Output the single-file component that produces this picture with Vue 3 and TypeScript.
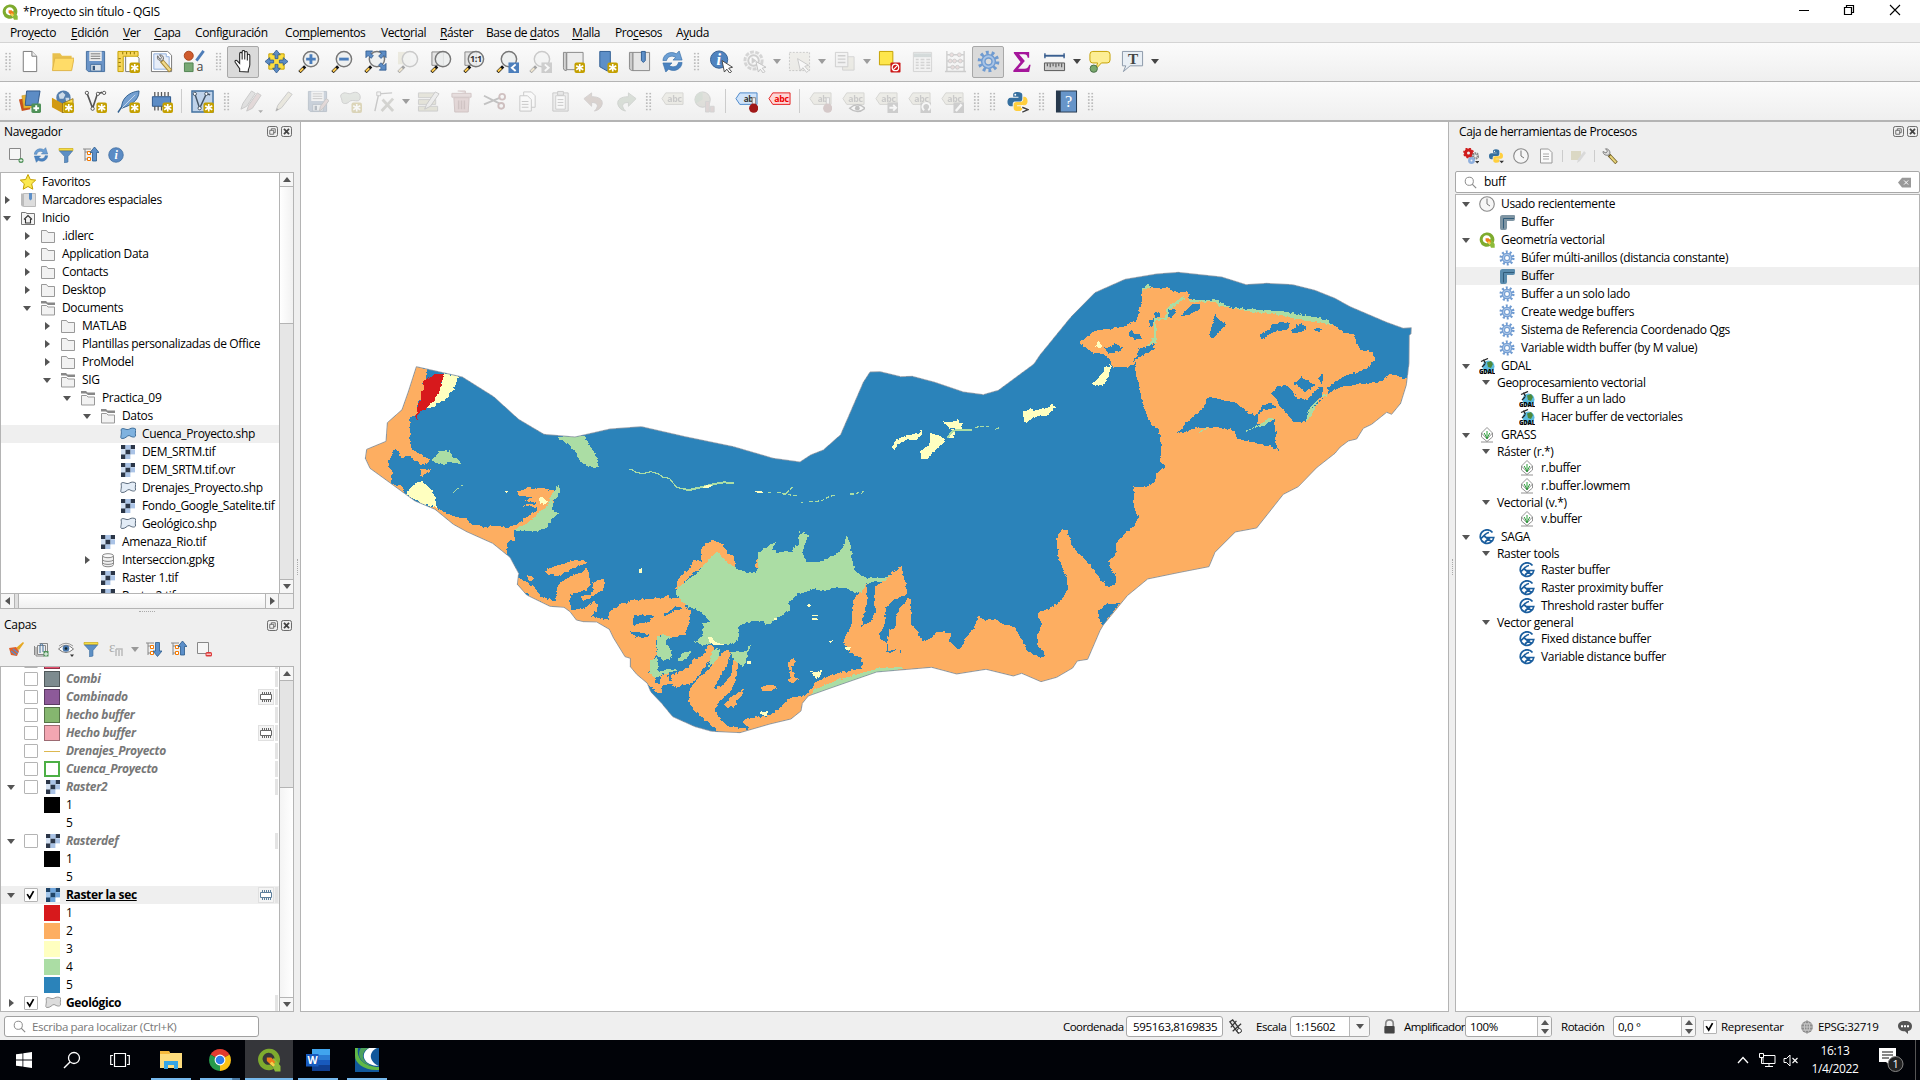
<script setup lang="ts">
interface Tool { k: 'i' | 'g' | 's' | 'a'; n?: string; on?: boolean; dim?: boolean; tight?: boolean }
interface Node { d: number; t: string; i: string; a?: 'o' | 'c'; sel?: boolean; group?: boolean }
interface Layer { t: string; i?: string; c?: string; b?: string; a?: 'o' | 'c'; chk?: boolean; top?: boolean; mem?: boolean; st?: string; sel?: boolean }

const star = '<rect x="13" y="13" width="11" height="11" rx="2" fill="#c4a000"/><path d="M18.5 14.5v8M14.8 16.4l7.4 4.2M14.8 20.6l7.4-4.2" stroke="#fff" stroke-width="1.7"/>'
const lens = '<path d="M1.5 23l6-6" stroke="#111" stroke-width="3.4"/><path d="M2 22.500l3.500-3.500" stroke="#fcc94f" stroke-width="2.200"/><circle cx="13.500" cy="9.500" r="8" fill="#eceeee" fill-opacity=".85" stroke="#777" stroke-width="1.500"/>'
const paper = '<path d="M5.500 1.500h9l5 5v16h-14z" fill="#fff" stroke="#777"/><path d="M14.500 1.500v5h5" fill="#eee" stroke="#777"/>'
const gear = '<circle cx="12" cy="12" r="9.300" fill="none" stroke="#6f9bd1" stroke-width="4" stroke-dasharray="2.900 2.943"/><circle cx="12" cy="12" r="5.400" fill="none" stroke="#6f9bd1" stroke-width="5"/><circle cx="12" cy="12" r="5.400" fill="none" stroke="#a9c4e6" stroke-width="2"/>'
const tag = (c: string, f: string, tx: string, t = 'abc') => `<path d="M1 9l4-6h18v12H5z" fill="${f}" stroke="${c}"/><text x="14" y="12.500" text-anchor="middle" font-size="10" font-weight="700" font-family="Open Sans,sans-serif" fill="${tx}" textLength="${t.length * 5}" lengthAdjust="spacingAndGlyphs">${t}</text>`
const raster = (a: string, b: string, c: string) => `<path fill="${c}" d="M1 1h14v14H1z"/><path fill="${a}" d="M1 1h4.500v4H1zM10.500 1H15v4h-4.500zM5.500 5.500h5v5h-5zM1 10.500h4.500V15H1z"/><path fill="${b}" d="M5.500 1h5v4.500h-5zM10.500 5.500H15v5h-4.500zM5.500 10.500h5V15h-5z"/><path d="M10.500 10.500H15V15h-4.500z" fill="#fff"/>`
const blob = (f: string, s: string) => `<path d="M1 3.500C3.500.8 6 5 9.500 3c2-1.300 4.500-1 5.900-.2.800 2.200-.7 4 .2 7.200-1.500 2-4 .8-6.500-.5-2.200 0-3.500 3.500-7.500 3C-.5 11.500 2.300 8.500 1 3.500z" fill="${f}" stroke="${s}"/>`
const arrowsTree = (p: string) => `<path d="M2 2v12M2 5h4M2 12h4M0 2h8" stroke="#888" fill="none"/><path d="M4.500 4.500h3v3h-3zM4.500 10.500h3v3h-3z" fill="#fff" stroke="#f57900"/><path d="${p}" fill="#5c8fc9" stroke="#2a5a8c" stroke-width=".8"/>`
const python = '<path d="M12 2c-4 0-4.500 1.500-4.500 3v2H13v1H5c-2.500 0-3.500 2-3.500 4.500S3 17 5 17h2v-2.500C7 12.500 8.500 12 10 12h4c2 0 3-1 3-3V5c0-2-2-3-5-3z" fill="#356f9f"/><path d="M12.500 22c4 0 4.500-1.500 4.500-3v-2h-5.500v-1H19c2.500 0 3.500-2 3.500-4.500S21 7 19 7h-1v2.500C18 12 16.500 12.500 15 12.500h-4c-2 0-3 1-3 3V19c0 2 2 3 4.500 3z" fill="#ffcf3e"/><circle cx="9.700" cy="5" r="1" fill="#fff"/>'
const qgis = '<path fill-rule="evenodd" d="M11 .8A10.700 10.700 0 1 0 17 20.800l-3.500-4.300A6 6 0 1 1 17.300 12.500l4.400 4A10.700 10.700 0 0 0 11 .8z" fill="#7eab2e"/><path d="M13 13l4-3 6.500 8v5.500H18z" fill="#8dbb3a"/><path d="M9.800 9.500h4.500l4 4.500-3.500 3.500-5-4.500z" fill="#ef7b1a"/><path d="M15 13.500l3 3.500-2 1.700-3.300-3.200z" fill="#f6d14a"/>'
const refresh = '<path d="M2 11C2.500 4 10 .5 16 4l3-3 3 9.500h-9.500l2.800-2.800C11 5 6.500 7 5.800 11z" fill="#6c9fd4" stroke="#3a70a8" stroke-width=".7"/><path d="M22 13c-.5 7-8 10.500-14 7l-3 3-3-9.500h9.500l-2.800 2.800C13 19 17.500 17 18.200 13z" fill="#4a82c0" stroke="#3a70a8" stroke-width=".7"/>'
const pencil = '<path d="M3 22l2-6L16 2l4 2.500L9 18.500z" fill="#d8cf9c" stroke="#777"/><path d="M3 22l1-3 2 1z" fill="#222"/>'
const disk = '<path d="M2.500 1.500h19v21h-17l-2-2z" fill="#6a94c8" stroke="#46709f"/><path d="M5.500 1.500h13v10h-13z" fill="#eee"/><path d="M7 4h10M7 6.500h10M7 9h10" stroke="#777"/><path d="M7 15h11v7H7z" fill="#dce3ea" stroke="#46709f"/><path d="M9 16.500h2.500V21H9z" fill="#36587e"/>'
const filter = '<path d="M1 1.500h14v2H1z" fill="#f5de43" stroke="#c4a000" stroke-width=".6"/><path d="M1.500 4h13L10 9.500V15l-3.500 1V9.500z" fill="#5d8fc4" stroke="#42709f" stroke-width=".6"/>'
const saga = '<path d="M13.500 3.500A6.800 6.800 0 1 0 14.800 8.500H7M1.200 9.500C4 9.500 6 3.500 10 3.500M4.500 6.500l8.500 6.500M11 8.500L6 13" fill="none" stroke="#1b5e9e" stroke-width="1.700"/>'
const grass = '<path d="M8 .5l5.500 5.500L8 12 2.500 6z" fill="#fff" stroke="#888" stroke-width=".9"/><path d="M2.500 6v4L8 14.500l5.500-4.500V6" fill="none" stroke="#888" stroke-width=".9"/><path d="M8 12V4M8 11.500L5.200 6M8 11.500L10.800 6" stroke="#2f9e3c" stroke-width="1" fill="none"/><path d="M2 15h12" stroke="#777" stroke-width=".8"/>'
const gdal = '<circle cx="9.500" cy="8.500" r="6" fill="#5bbbe0"/><path d="M8 4.500l4-1.500 2 3-2 4-3-1z" fill="#4e8a3c"/><path d="M2 3.500L9 .5M4.500 1.500l2 4M6 6L3 9" stroke="#222" stroke-width="1.300"/><text x="8" y="15.700" text-anchor="middle" font-size="7.500" font-weight="800" font-family="Open Sans,sans-serif" textLength="16" lengthAdjust="spacingAndGlyphs" fill="#000">GDAL</text>'
const clock = '<circle cx="8" cy="8" r="7.300" fill="#f6f6f6" stroke="#888" stroke-width="1.100"/><path d="M8 2.500V8l3 2" fill="none" stroke="#777"/>'
const info = '<circle cx="8" cy="8" r="7.300" fill="#5b8bc4" stroke="#3a689c" stroke-width=".7"/><text x="8" y="12.200" text-anchor="middle" font-family="Liberation Serif,serif" font-style="italic" font-weight="700" font-size="12" fill="#fff">i</text>'
const elbow = (c: string) => `<path d="M1 3.500Q1 1 3.500 1H15q1 0 1 1v3q0 2-2 2H8v7q0 2-2 2H2.500Q1 16 1 14z" fill="${c}"/><path d="M4.500 14.500v-10H15" stroke="#315c7a" fill="none"/>`

const icons: Record<string, string> = {
  qgis,
  new: paper,
  open: '<path d="M1.500 3.500h8l2 2.500h10v15h-20z" fill="#e9c14e"/><path d="M4 8.500h20l-2.500 13H1.500z" fill="#ffdc68" stroke="#e0b548"/>',
  save: disk,
  layout: '<path d="M9 3.500h9l5 5v14H9z" fill="#fff" stroke="#777"/><path d="M1 1.500h21v5H6.500v16H1z" fill="#f7d65a" stroke="#c4a000"/><path d="M6 2v2.500M10 2v2.500M14 2v2.500M18 2v2.500M1.500 9H4M1.500 13H4M1.500 17H4" stroke="#8a7000"/>' + star,
  style: '<path d="M1.500 1.500h17l4 4v17h-21z" fill="#fff" stroke="#777"/><path d="M4 4h13v3h3v13H4z" fill="#e8eef8" stroke="#8fb0de"/><path d="M12 11l9.500 11" stroke="#a8893a" stroke-width="4.500"/><path d="M13 12l8 9.300" stroke="#f0d98a" stroke-width="2.500"/><path d="M8 6c-1 3 1 5.500 4 5.500l2-2C14.500 7 13 5 10 5l2 3-1.500 2z" fill="#ddd" stroke="#666"/>',
  props: '<circle cx="6" cy="6" r="4.700" fill="#cf5b2d" stroke="#a8441c"/><path d="M14 11l7.500-10" stroke="#4e7db8" stroke-width="3"/><path d="M1.500 13.500h9v9h-9z" fill="#78a874" stroke="#4f8350"/><text x="14" y="22" font-size="13" font-family="Open Sans,sans-serif" fill="#444">a</text>',
  hand: '<path d="M8 22.500v-3L3.500 13c-1.200-2 .8-3 2.200-1.500L8 14V4c0-2 2.600-2 2.600 0v6-8c0-2 2.700-2 2.700 0v8-7c0-2 2.700-2 2.700 0v8-5c0-2 2.600-2 2.600 0v9c0 3-1.600 4.500-1.600 6.500v1.500z" fill="#fff" stroke="#222" stroke-width="1.100"/>',
  pan: '<path d="M4 4h16v16H4z" fill="#fdde3e" stroke="#c4a000"/><path d="M12 0l4 5h-2.500v4h-3V5H8zM12 24l-4-5h2.500v-4h3v4H16zM0 12l5-4v2.500h4v3H5V16zM24 12l-5 4v-2.500h-4v-3h4V8z" fill="#5c8cc5" stroke="#2c568a" stroke-width=".8"/>',
  zin: lens + '<path d="M13.500 4.500v10M8.500 9.500h10" stroke="#4a7dbb" stroke-width="3"/>',
  zout: lens + '<path d="M8.500 9.500h10" stroke="#4a7dbb" stroke-width="3"/>',
  zfull: lens + '<path d="M2 1h7L6.800 3.200l3 3-2.500 2.500-3-3L2 8zM23 1v7l-2.200-2.200-3 3-2.500-2.500 3-3L16 1zM23 21h-7l2.200-2.200-3-3 2.500-2.500 3 3L23 14z" fill="#5c8cc5" stroke="#2c568a" stroke-width=".8"/>',
  zsel: '<path d="M1 2h13v13H1z" fill="#ddd49a"/>' + lens,
  zlay: '<path d="M2 2h12v14H2z" fill="#e4e4e4" stroke="#888"/>' + lens,
  z11: '<path d="M2 2h12v14H2z" fill="#e4e4e4" stroke="#888"/>' + lens + '<text x="13.500" y="13" text-anchor="middle" font-size="9.500" font-weight="700" font-family="Open Sans,sans-serif" fill="#333">1:1</text>',
  zlast: lens + '<path d="M13 13h11v11H13z" fill="#4d7fbc"/><path d="M20.500 15l-4 3.500 4 3.500" fill="none" stroke="#fff" stroke-width="2"/>',
  znext: lens + '<path d="M13 13h11v11H13z" fill="#888"/><path d="M16.500 15l4 3.500-4 3.500" fill="none" stroke="#fff" stroke-width="2"/>',
  map: '<path d="M5 2.500h17v18H5z" fill="#ececec" stroke="#888"/><path d="M1.500 2.500h3v19c-2 0-3-1-3-3z" fill="#d4d4d4" stroke="#888"/>' + star,
  bmnew: '<path d="M5 1.500h11V19l-3 3-8-4.500z" fill="#5d8fc8" stroke="#2f5d92"/>' + star,
  bm: '<path d="M5 2.500h17.500v19H5z" fill="#e6e6e6" stroke="#888"/><path d="M1.500 2.500H5v19c-2 0-3.500-1-3.500-3z" fill="#ccc" stroke="#888"/><path d="M14 1.500h4V11l-2 2-2-2z" fill="#5d8fc8" stroke="#2f5d92"/>',
  refresh,
  ident: '<circle cx="9.500" cy="10" r="9" fill="#4f83bf" stroke="#345f92"/><text x="9" y="15.500" text-anchor="middle" font-family="Liberation Serif,serif" font-style="italic" font-weight="700" font-size="17" fill="#fff">i</text><path d="M12.500 11l2.500 12 2.500-3 3 4 2-1.500-3-3.500 4-1z" fill="#fff" stroke="#444"/>',
  action: '<circle cx="11" cy="11" r="9" fill="#eee" stroke="#999" stroke-width="3" stroke-dasharray="4 1.500"/><circle cx="11" cy="11" r="5.500" fill="#fff" stroke="#888" stroke-width="2"/><path d="M9 7.500l5 3.500-5 3.500z" fill="#888"/><path d="M13.500 12l2.500 11 2-3 3 4 2-1.500-3-3.500 4-1z" fill="#fff" stroke="#666"/>',
  select: '<path d="M1.500 2.500h21v19h-21z" fill="#e2dfc8" stroke="#777" stroke-dasharray="2 1.500"/><path d="M10 9l3 13 2.500-3.500 4 5 2-2-4-4.500 4-1z" fill="#fff" stroke="#777"/>',
  form: '<path d="M10 7h12v14H10z" fill="#ddd9b8" stroke="#999"/><path d="M2.500 2.500h13v15h-13z" fill="#eee" stroke="#888"/><path d="M5 6h8M5 9.500h8M5 13h8" stroke="#888" stroke-width="1.500"/>',
  desel: '<path d="M1.500 1.500h14v14h-14z" fill="#fee64c" stroke="#c4a000"/><rect x="13" y="13" width="10.500" height="10.500" rx="1" fill="#cc1616"/><circle cx="18.200" cy="18.200" r="3.400" fill="none" stroke="#fff" stroke-width="1.300"/><path d="M16 20.500l4.500-4.500" stroke="#fff" stroke-width="1.300"/>',
  table: '<path d="M2.500 2.500h19v20h-19z" fill="#eee" stroke="#999"/><path d="M3 5.500h18" stroke="#8aa" stroke-width="4"/><path d="M5 10h3M10 10h4M16 10h4M5 13h3M10 13h4M16 13h4M5 16h3M10 16h4M16 16h4M5 19h3M10 19h4M16 19h4" stroke="#999" stroke-width="1.500"/>',
  abacus: '<path d="M3 1v21M21 1v21M3 5h18M3 11.500h18M3 18h18M1 22.500h22" stroke="#888" fill="none" stroke-width="1.500"/><g fill="#eaa" stroke="#888"><circle cx="8" cy="5" r="2"/><circle cx="16" cy="5" r="2"/><circle cx="6.500" cy="11.500" r="2"/><circle cx="11" cy="11.500" r="2"/><circle cx="17" cy="11.500" r="2"/><circle cx="9" cy="18" r="2"/><circle cx="14" cy="18" r="2"/></g>',
  gear,
  sigma: '<path d="M4 2h16v6h-1.500c-.5-2.500-1.500-3.500-4-3.500H9.500l6 7-7 8H15c3 0 4-1 5-4h1.500L20 23H3.500v-1.500l7.500-9-7-9z" fill="#a5169b"/>',
  ruler: '<path d="M1.500 6h21" stroke="#3a5f90" stroke-width="2"/><path d="M2 3.500v5M22 3.500v5" stroke="#3a5f90" stroke-width="1.500"/><path d="M1.500 13.500h21v8h-21z" fill="#ccc" stroke="#555"/><path d="M4.500 14v3M7.500 14v4M10.500 14v3M13.500 14v4M16.500 14v3M19.500 14v4" stroke="#444"/>',
  tip: '<path d="M5 1.500h15q3 0 3 3v6q0 3-3 3h-6L8 20l2-6.500H5q-3 0-3-3v-6q0-3 3-3z" fill="#fdee94" stroke="#c4a000"/><circle cx="6" cy="19.500" r="3.800" fill="#78a86c" stroke="#4a6f4a"/>',
  text: '<path d="M1.500 1.500h21v15h-13l-7 6 2.500-6h-3.500z" fill="#e9eff5" stroke="#8a98a8"/><text x="12.500" y="14.500" text-anchor="middle" font-size="16" font-weight="700" font-family="Liberation Serif,serif" fill="#444">T</text>',
  ds: '<path d="M1 10l9-2 3 12-9 2z" fill="#c8501e"/><path d="M4 6l12-2 2 14-12 1z" fill="#e8b636" stroke="#c08c14" stroke-width=".5"/><path d="M9 1h14l-2.500 15H7.500z" fill="#5c8cc5" stroke="#31598a"/><rect x="14" y="14" width="10" height="10" rx="1.500" fill="#4f9158"/><path d="M19 16v6M16 19h6" stroke="#fff" stroke-width="2"/>',
  gpkg: '<circle cx="13" cy="8" r="7.500" fill="#557fae"/><path d="M8 5l4-3 3 3-2 4-4 0zM15 8l4 0 0 3-3 2z" fill="#cddbe8"/><path d="M1 8l11 6v10L1 18z" fill="#d29a14"/><path d="M12 14l11-5v10l-11 5z" fill="#ffdf4f" stroke="#8b6508" stroke-width=".8"/>' + star,
  shp: '<path d="M3 3l6 16 5-15 5-1.500" fill="none" stroke="#555" stroke-width="1.700"/><g fill="#fff" stroke="#555"><circle cx="3" cy="3" r="1.700"/><circle cx="9" cy="19.500" r="1.700"/><circle cx="14.500" cy="4" r="1.700"/><circle cx="21" cy="3" r="1.700"/></g>' + star,
  feather: '<path d="M1 23.500L8 13" stroke="#32608f" stroke-width="1.500"/><path d="M5 19C4 10 12 2 23 1c0 5-2 9-6 12-3 3-7 4-12 6z" fill="#739fd0" stroke="#32608f"/><path d="M5 19L19 5" stroke="#dde8f4" stroke-width=".8"/>' + star,
  chip: '<path d="M2.500 7h19v10h-19z" fill="#5c8cc5" stroke="#2c568a"/><path d="M5 6.500V2M8.500 6.500V2M12 6.500V2M15.500 6.500V2M19 6.500V2M5 21.500V17M8.500 21.500V17M12 21.500V17" stroke="#555" stroke-width="1.300"/>' + star,
  vbox: '<path d="M1 1h22v22H1z" fill="#bfd3ea" stroke="#42709f" stroke-width="1.500"/><path d="M4 4l5 15 7-15 4 1" fill="none" stroke="#456" stroke-width="1.500"/><g fill="#fff" stroke="#456"><circle cx="4" cy="4" r="1.700"/><circle cx="9" cy="19" r="1.700"/><circle cx="16" cy="4" r="1.700"/></g>' + star,
  pencils: '<path d="M1 20l2-6L12 1l4 2.500L7 17z" fill="#bbb" stroke="#777"/><path d="M7 22l2-6L18 3l4 2.500L13 19z" fill="#d9a0a0" stroke="#777"/><path d="M19 21h5l-2.500 3z" fill="#333"/>',
  pencil,
  saveed: disk + '<path d="M14 22l1-5 6-8 3 2-6 8z" fill="#d8a0a0" stroke="#777"/>',
  poly: '<path d="M2 5c5-5 7 1 12-2 5-2 9 1 8 6s-8 0-11 3-8 3-8-1c0-3-2-3-1-6z" fill="#b9c9b4" stroke="#888"/>' + star,
  vertex: '<path d="M3 22L7 4l14-1" fill="none" stroke="#777" stroke-width="1.500"/><path d="M5 2h4v4H5z" fill="#eee" stroke="#777"/><path d="M11 10l11 12M22 9L10 22" stroke="#998" stroke-width="3"/>',
  multi: '<path d="M1.500 3h18v5h-18zM1.500 10h18v5h-18zM1.500 17h20v5h-20z" fill="#c9c58e" stroke="#888"/><path d="M8 20l2-5 9-13 4 2-9 13z" fill="#ddd" stroke="#777"/>',
  trash: '<path d="M4 8h16l-1 15H5z" fill="#d99" stroke="#a66"/><path d="M2 3.500h20v4H2zM8 1h8v2.500" fill="#daa" stroke="#a66"/><path d="M9 11v9M12 11v9M15 11v9" stroke="#a66" stroke-width="1.500"/>',
  cut: '<path d="M1 6l16 8M1 15l17-7" stroke="#666" stroke-width="2"/><circle cx="20" cy="7" r="3" fill="none" stroke="#a55" stroke-width="2"/><circle cx="19" cy="16.500" r="3" fill="none" stroke="#a55" stroke-width="2"/>',
  copy: '<path d="M8 2h8l4 4v12H8z" fill="#fff" stroke="#777"/><path d="M4 6h8l4 4v12H4z" fill="#fff" stroke="#777"/><path d="M6 12h7M6 15h7M6 18h7" stroke="#777"/>',
  paste: '<path d="M4 3h16v19H4z" fill="#ddd" stroke="#777"/><path d="M7 6h10v14H7z" fill="#fff" stroke="#888"/><path d="M9 1.500h6v4H9z" fill="#ccc" stroke="#777"/><path d="M9 10h6M9 13h6M9 16h6" stroke="#777"/>',
  undo: '<path d="M2 9l8-6v4c8 0 12 3 11 8-1 4-4 6-8 7 4-4 5-9-3-9v4z" fill="#b9907c" stroke="#988"/>',
  redo: '<path d="M22 9l-8-6v4C6 7 2 10 3 15c1 4 4 6 8 7-4-4-5-9 3-9v4z" fill="#9ab894" stroke="#898"/>',
  lab: tag('#998', '#ddd9bc', '#777'),
  pie: '<circle cx="9" cy="10" r="8" fill="#b8b8a0" stroke="#888"/><path d="M9 10V2a8 8 0 0 0-7 12z" fill="#8fb88f"/><path d="M12 12h4v11h-4zM17 17h4v6h-4z" fill="#c99" stroke="#999"/>',
  labt: tag('#4a86c9', '#cfe3fa', '#333', 'ab') + '<path d="M18 8h3.500v8H18z" fill="#eee" stroke="#888"/><circle cx="19.500" cy="19" r="4.800" fill="#a01818"/>',
  labred: tag('#e41a1a', '#fdd6d6', '#e00'),
  labpin: tag('#998', '#ddd9bc', '#777', 'ab') + '<path d="M18 8h3.500v8H18z" fill="#eee" stroke="#888"/><circle cx="19.500" cy="19" r="4.800" fill="#b77"/>',
  labeye: tag('#998', '#ddd9bc', '#777') + '<path d="M8 19q8-7 16 0-8 7-16 0z" fill="#fff" stroke="#666" stroke-width="1.500"/><circle cx="16" cy="19" r="2.500" fill="#666"/>',
  labmove: tag('#998', '#ddd9bc', '#777') + '<path d="M13 13h11v11H13z" fill="#888"/><path d="M15 18.500h7M19 15.500l3 3-3 3" fill="none" stroke="#fff" stroke-width="2"/>',
  labrot: tag('#998', '#ddd9bc', '#777') + '<path d="M13 13h11v11H13z" fill="#888"/><path d="M17 21a4 4 0 1 1 4 0" fill="none" stroke="#fff" stroke-width="2"/>',
  labedit: tag('#998', '#ddd9bc', '#777') + '<path d="M13 13h11v11H13z" fill="#888"/><path d="M15.500 22l6-7" stroke="#fff" stroke-width="2.500"/>',
  python: python + '<path d="M16 17l6 3-6 3.500" fill="none" stroke="#fff" stroke-width="3"/><path d="M17 18l6 2.500-6 2.500" fill="none" stroke="#444" stroke-width="1.500"/>',
  pymenu: python + '<path d="M17 19h7l-3.500 4z" fill="#333"/>',
  help: '<path d="M1 .5h22v23H1z" fill="#27394d"/><path d="M6 1.500h16v21H6z" fill="#6795c9"/><text x="14" y="18" text-anchor="middle" font-size="17" font-family="Liberation Serif,serif" fill="#fff">?</text>',
  // 16px glyphs
  star: '<path d="M8 .5l2.300 5 5.400.6-4 3.700 1.100 5.400L8 12.500l-4.800 2.700 1.100-5.400-4-3.700 5.400-.6z" fill="#fce94f" stroke="#c4a000"/>',
  book: '<path d="M3.500 1.500h12v13h-12z" fill="#ddd" stroke="#bbb"/><path d="M1 1.500h2.500v13H2L1 13z" fill="#bbb"/><path d="M9 1h3v6L10.500 8.500 9 7z" fill="#5d8fc8"/>',
  home: '<path d="M1.500 2.500h4l1.500 1h7.500v11h-13z" fill="#f4f4f4" stroke="#777"/><path d="M4 9.500L8 5.500l4 4M5.500 9v4h5V9" fill="none" stroke="#333" stroke-width="1.100"/>',
  folder: '<path d="M1.500 2.500h5l1.500 2h6.500v10h-13z" fill="#f2f2f2" stroke="#999"/>',
  fopen: '<path d="M1 1h5l1.500 1.500H15V5H8L6 3.500H1z" fill="#888"/><path d="M1.500 5.500h5l1.500 1.500h6.500v8h-13z" fill="#f2f2f2" stroke="#999"/>',
  blobsel: blob('#7fb2df', '#3f6f9c'),
  blob: blob('#e3ecf6', '#5a6a7c'),
  blobg: blob('#ddd', '#999'),
  raster: raster('#2b3648', '#aac3e6', '#d4e2f4'),
  rastersel: raster('#1f4468', '#6fa5dd', '#a5c8ec'),
  db: '<path d="M2.500 4v8.500c0 3 11 3 11 0V4" fill="#f0f0f0" stroke="#888"/><ellipse cx="8" cy="3.700" rx="5.500" ry="2" fill="#fafafa" stroke="#888"/><path d="M2.500 7.500c0 2.500 11 2.500 11 0M2.500 10.500c0 2.500 11 2.500 11 0" fill="none" stroke="#888"/>',
  add: '<path d="M1.500 1.500h11v11h-11z" fill="#f6f6f6" stroke="#888"/><circle cx="13" cy="13.500" r="2.500" fill="#4f9158"/><path d="M13 12v3M11.500 13.500h3" stroke="#fff" stroke-width=".8"/>',
  filter,
  up: arrowsTree('M11.500 0L16 5.500h-2.500V14h-4V5.500H7z'),
  down: arrowsTree('M11.500 15.500L7 10h2.500V1.500h4V10H16z'),
  info,
  brush: '<path d="M8 7l7-6 1 1-5 7z" fill="#e6a823"/><path d="M1 7l7-1 3 4-2 5-6-1z" fill="#e0602c"/><path d="M5 8l5 4M3 10l5 4" stroke="#5c8cc5" stroke-width="1.500"/>',
  grp: '<path d="M1.500 5v9M4.500 4.500h8v9h-8zM3 6v9h8M6.500 2.500h8v9" fill="none" stroke="#888"/><path d="M7 12V5q0-2 1.500-2T10 5v6" fill="none" stroke="#42709f"/><path d="M10.500 10h5v5.500h-5z" fill="#4f9158"/><path d="M13 11v4M11 13h4" stroke="#fff"/>',
  eye: '<path d="M.5 8Q8 .5 15.500 8 8 15 .5 8z" fill="#fff" stroke="#777"/><circle cx="8" cy="7.500" r="3.300" fill="#4876ab"/><circle cx="8" cy="7.500" r="1.300" fill="#122"/><path d="M1 5Q8-.5 15 5" fill="none" stroke="#999"/><path d="M12 13.500h4L14 16z" fill="#333"/>',
  eps: '<text x="1" y="11" font-size="15" font-family="Liberation Serif,serif" fill="#aaa">ε</text><path d="M8 8h6v7M8 8v7M11 9v6" fill="none" stroke="#bbb" stroke-width="1.500"/>',
  rem: '<path d="M1.500 1.500h11v11h-11z" fill="#f6f6f6" stroke="#888"/><rect x="9.500" y="11" width="6.500" height="4.500" rx="1.500" fill="#dd3a3a"/><path d="M10.500 13.200h4.500" stroke="#fff"/>',
  mem: '<path d="M1.500 4.500h11v5h-11z" fill="#fff" stroke="currentColor"/><path d="M3.500 4V2M5.500 4V2M7.500 4V2M9.500 4V2M11.500 4V2M3.500 12v-2M5.500 12v-2M7.500 12v-2M9.500 12v-2M11.500 12v-2" stroke="currentColor"/>',
  clock, gdal, grass, saga,
  elb1: elbow('#7f95a3'), elb2: elbow('#5a8cae'),
  gears: '<circle cx="5.500" cy="5" r="3" fill="none" stroke="#cf1c1c" stroke-width="3"/><circle cx="5.500" cy="5" r="4.700" fill="none" stroke="#cf1c1c" stroke-width="1.500" stroke-dasharray="1.900 1.800"/><circle cx="12.500" cy="8" r="2.500" fill="none" stroke="#888" stroke-width="2.500" stroke-dasharray="1.500 .6"/><circle cx="8.500" cy="12.500" r="2.200" fill="none" stroke="#8fb0de" stroke-width="2.500"/><path d="M12 13h4.500l-2.200 2.500z" fill="#333"/>',
  doc: '<path d="M2.500 1h8l3.500 3.500V15H2.500z" fill="#fafafa" stroke="#999"/><path d="M5 6h6M5 8.500h6M5 11h6" stroke="#aaa" stroke-width="1.200"/>',
  edit: '<path d="M1 3h10v9H1z" fill="#cfcaa8"/><path d="M7 15l1-4 6-8 2 2-6 8z" fill="#ccc"/>',
  wrench: '<path d="M7 7l7.500 8" stroke="#6d5b20" stroke-width="3.400"/><path d="M8 8l6 6.500" stroke="#e6d27a" stroke-width="2"/><path d="M1 3.500C1 6.500 4 8 7 7l1-2C8 2.500 6 .5 3.500.8L5.500 3 4 5z" fill="#ddd" stroke="#777" stroke-width=".9"/>',
  search: '<circle cx="6.500" cy="6.500" r="5" fill="none" stroke="#888" stroke-width="1.200"/><path d="M10 10l5 5" stroke="#888" stroke-width="1.400"/>',
  clear: '<path d="M5 2h11v12H5L0 8z" fill="#999"/><path d="M7.500 5.500l5 5M12.500 5.500l-5 5" stroke="#fff" stroke-width="1.200"/>',
  float: '<rect x=".6" y=".6" width="12.800" height="12.800" rx="2.500" fill="none" stroke="#555" stroke-width="1.100"/><path d="M5.500 5.500v-2h5v5h-2M3.500 5.500h5v5h-5z" fill="none" stroke="#555"/>',
  close: '<rect x=".6" y=".6" width="12.800" height="12.800" rx="2.500" fill="none" stroke="#555" stroke-width="1.100"/><path d="M3.800 3.800l6.400 6.400M10.200 3.800l-6.400 6.400" stroke="#444" stroke-width="2.300"/>',
  mouse: '<path d="M2 3l3-2 9 12-3 2zM3 9L9 2M5 13l9-8" fill="#ddd" stroke="#333" stroke-width="1.300"/><circle cx="12" cy="12.500" r="2.300" fill="#fff" stroke="#333"/>',
  lock: '<path d="M4 8V5q0-4 4-4t4 4v3" fill="none" stroke="#888" stroke-width="1.800"/><rect x="2.500" y="7.500" width="11" height="8" rx="1" fill="#444"/>',
  globe: '<circle cx="8" cy="8" r="6.800" fill="#8b8b8b"/><path d="M8 1v14M1 8h14M2.500 4.500h11M2.500 11.500h11M8 1Q1.500 8 8 15M8 1q6.500 7 0 14" fill="none" stroke="#ddd" stroke-width=".8"/><path d="M8 .5v3M8 12.500v3" stroke="#555"/>',
  msg: '<path d="M8 2C12.500 2 15 4 15 7s-1.500 4.500-4 5v3L8 12.300C3.500 12.300 1 10 1 7s2.500-5 7-5z" fill="#555"/><path d="M4 6.200h2v2H4zM7 6.200h2v2H7zM10 6.200h2v2h-2z" fill="#fff"/>',
}

const I = (n: string, on = false): Tool => ({ k: 'i', n, on })
const D = (n: string): Tool => ({ k: 'i', n, dim: true })
const G: Tool = { k: 'g' }, GT: Tool = { k: 'g', tight: true }, S: Tool = { k: 's' }, A: Tool = { k: 'a' }, AD: Tool = { k: 'a', dim: true }
const row1: Tool[] = [G, I('new'), I('open'), I('save'), I('layout'), I('style'), I('props'), G, I('hand', true), I('pan'), I('zin'), I('zout'), I('zfull'), D('zsel'), I('zlay'), I('z11'), I('zlast'), D('znext'), I('map'), I('bmnew'), I('bm'), I('refresh'), G, I('ident'), D('action'), AD, D('select'), AD, D('form'), AD, I('desel'), D('table'), D('abacus'), I('gear', true), I('sigma'), I('ruler'), A, I('tip'), I('text'), A]
const row2: Tool[] = [G, I('ds'), I('gpkg'), I('shp'), I('feather'), I('chip'), S, I('vbox'), G, D('pencils'), D('pencil'), D('saveed'), D('poly'), D('vertex'), AD, D('multi'), D('trash'), D('cut'), D('copy'), D('paste'), D('undo'), D('redo'), GT, D('lab'), D('pie'), S, I('labt'), I('labred'), S, D('labpin'), D('labeye'), D('labmove'), D('labrot'), D('labedit'), G, G, I('python'), G, I('help'), G]

const menus: [string, string, string, number][] = [
  ['Pro', 'y', 'ecto', 47], ['', 'E', 'dición', 38], ['', 'V', 'er', 17], ['', 'C', 'apa', 27], ['Confi', 'g', 'uración', 76],
  ['Co', 'm', 'plementos', 82], ['Vect', 'o', 'rial', 45], ['', 'R', 'áster', 32], ['Base de ', 'd', 'atos', 72], ['', 'M', 'alla', 29], ['Pro', 'c', 'esos', 47], ['A', 'y', 'uda', 34],
]

const browser: Node[] = [
  { d: 0, t: 'Favoritos', i: 'star' }, { d: 0, t: 'Marcadores espaciales', i: 'book', a: 'c' }, { d: 0, t: 'Inicio', i: 'home', a: 'o' },
  { d: 1, t: '.idlerc', i: 'folder', a: 'c' }, { d: 1, t: 'Application Data', i: 'folder', a: 'c' }, { d: 1, t: 'Contacts', i: 'folder', a: 'c' }, { d: 1, t: 'Desktop', i: 'folder', a: 'c' }, { d: 1, t: 'Documents', i: 'fopen', a: 'o' },
  { d: 2, t: 'MATLAB', i: 'folder', a: 'c' }, { d: 2, t: 'Plantillas personalizadas de Office', i: 'folder', a: 'c' }, { d: 2, t: 'ProModel', i: 'folder', a: 'c' }, { d: 2, t: 'SIG', i: 'fopen', a: 'o' },
  { d: 3, t: 'Practica_09', i: 'fopen', a: 'o' }, { d: 4, t: 'Datos', i: 'fopen', a: 'o' },
  { d: 5, t: 'Cuenca_Proyecto.shp', i: 'blobsel', sel: true }, { d: 5, t: 'DEM_SRTM.tif', i: 'raster' }, { d: 5, t: 'DEM_SRTM.tif.ovr', i: 'raster' }, { d: 5, t: 'Drenajes_Proyecto.shp', i: 'blob' }, { d: 5, t: 'Fondo_Google_Satelite.tif', i: 'raster' }, { d: 5, t: 'Geológico.shp', i: 'blob' },
  { d: 4, t: 'Amenaza_Rio.tif', i: 'raster' }, { d: 4, t: 'Interseccion.gpkg', i: 'db', a: 'c' }, { d: 4, t: 'Raster 1.tif', i: 'raster' }, { d: 4, t: 'Raster2.tif', i: 'raster' },
]

const layers: Layer[] = [
  { t: '', c: '#e8506e', b: '#93334a', top: true },
  { t: 'Combi', c: '#7d8b8f', b: '#50595b', top: true }, { t: 'Combinado', c: '#8d5a99', b: '#5a3a62', top: true, mem: true }, { t: 'hecho buffer', c: '#85b66f', b: '#557447', top: true },
  { t: 'Hecho buffer', c: '#f3a6b2', b: '#9c6a72', top: true, mem: true }, { t: 'Drenajes_Proyecto', st: 'line', top: true }, { t: 'Cuenca_Proyecto', st: 'box', top: true },
  { t: 'Raster2', i: 'raster', a: 'o', top: true }, { t: '1', c: '#000' }, { t: '5', c: '#fff' },
  { t: 'Rasterdef', i: 'raster', a: 'o', top: true }, { t: '1', c: '#000' }, { t: '5', c: '#fff' },
  { t: 'Raster la sec', i: 'rastersel', a: 'o', top: true, chk: true, sel: true, mem: true },
  { t: '1', c: '#d7191c' }, { t: '2', c: '#fdae61' }, { t: '3', c: '#ffffc0' }, { t: '4', c: '#abdda4' }, { t: '5', c: '#2b83ba' },
  { t: 'Geológico', i: 'blobg', a: 'c', top: true, chk: true },
]

const algs: Node[] = [
  { d: 0, t: 'Usado recientemente', i: 'clock', a: 'o' }, { d: 1, t: 'Buffer', i: 'elb1' },
  { d: 0, t: 'Geometría vectorial', i: 'qgis', a: 'o' }, { d: 1, t: 'Búfer múlti-anillos (distancia constante)', i: 'gear' }, { d: 1, t: 'Buffer', i: 'elb2', sel: true },
  { d: 1, t: 'Buffer a un solo lado', i: 'gear' }, { d: 1, t: 'Create wedge buffers', i: 'gear' }, { d: 1, t: 'Sistema de Referencia Coordenado Qgs', i: 'gear' }, { d: 1, t: 'Variable width buffer (by M value)', i: 'gear' },
  { d: 0, t: 'GDAL', i: 'gdal', a: 'o' }, { d: 1, t: 'Geoprocesamiento vectorial', i: '', a: 'o', group: true }, { d: 2, t: 'Buffer a un lado', i: 'gdal' }, { d: 2, t: 'Hacer buffer de vectoriales', i: 'gdal' },
  { d: 0, t: 'GRASS', i: 'grass', a: 'o' }, { d: 1, t: 'Ráster (r.*)', i: '', a: 'o', group: true }, { d: 2, t: 'r.buffer', i: 'grass' }, { d: 2, t: 'r.buffer.lowmem', i: 'grass' },
  { d: 1, t: 'Vectorial (v.*)', i: '', a: 'o', group: true }, { d: 2, t: 'v.buffer', i: 'grass' },
  { d: 0, t: 'SAGA', i: 'saga', a: 'o' }, { d: 1, t: 'Raster tools', i: '', a: 'o', group: true }, { d: 2, t: 'Raster buffer', i: 'saga' }, { d: 2, t: 'Raster proximity buffer', i: 'saga' }, { d: 2, t: 'Threshold raster buffer', i: 'saga' },
  { d: 1, t: 'Vector general', i: '', a: 'o', group: true }, { d: 2, t: 'Fixed distance buffer', i: 'saga' }, { d: 2, t: 'Variable distance buffer', i: 'saga' },
]
const box = (n: string) => (['gear', 'qgis', 'refresh', 'pymenu'].includes(n) ? '0 0 24 24' : '0 0 16 16')

const basin = '229,80 367,111 461,170 536,238 612,283 705,291 810,267 904,260 1035,290 1180,320 1300,355 1380,366 1412,345 1450,330 1502,284 1570,127 1590,96 1620,95 1682,110 1717,109 1785,127 1870,156 1930,164 1975,151 2082,72 2100,45 2192,-68 2265,-142 2355,-182 2450,-198 2515,-203 2645,-189 2718,-166 2780,-170 2857,-166 2925,-149 2985,-125 3030,-100 3140,-53 3190,-35 3214,-37 3213,-18 3208,-15 3207,70 3199,135 3182,190 3155,223 3140,217 3095,253 3070,265 3050,297 3025,303 3000,322 2985,340 2930,383 2875,440 2830,463 2750,564 2686,576 2625,637 2607,680 2515,698 2423,717 2362,767 2290,855 2280,872 2243,958 2212,963 2198,984 2150,1012 2103,1025 2045,1000 2020,1008 1938,988 1850,1002 1775,982 1610,996 1475,1043 1405,1068 1387,1090 1383,1113 1353,1137 1290,1152 1200,1178 1115,1174 1065,1160 998,1130 965,1090 932,1055 922,1030 890,1003 871,980 871,955 855,950 820,893 808,868 770,846 730,845 709,840 690,815 672,802 630,799 560,765 532,733 536,700 510,652 458,610 380,575 340,553 285,508 225,483 200,465 155,432 90,385 76,355 80,328 138,304 142,248 186,209 205,155'
</script>

<template>
  <div class="app">
    <header class="title">
      <svg class="logo" viewBox="0 0 24 24" v-html="icons.qgis" />
      <span class="name">*Proyecto sin título - QGIS</span>
      <svg class="winbtns" width="140" height="23" viewBox="0 0 140 23"><path d="M19 10.500h10" stroke="#000" /><path d="M64.500 7.500h7v7h-7zM66.500 7.500v-2h7v7h-2" fill="none" stroke="#000" stroke-width="1.200" /><path d="M110 5l10 10M120 5l-10 10" stroke="#000" stroke-width="1.100" /></svg>
    </header>
    <nav class="menu">
      <span v-for="m in menus" :key="m[1] + m[2]" class="mi" :style="{ width: m[3] + 'px' }">{{ m[0] }}<u>{{ m[1] }}</u>{{ m[2] }}</span>
    </nav>
    <div v-for="(row, r) in [row1, row2]" :key="r" class="bar" :class="'bar' + r">
      <template v-for="(t, i) in row" :key="i">
        <span v-if="t.k === 'g'" class="grip" :class="{ first: i === 0, tight: t.tight }" />
        <span v-else-if="t.k === 's'" class="sep" />
        <span v-else-if="t.k === 'a'" class="drop" :class="{ dim2: t.dim }" />
        <span v-else class="tool" :class="{ on: t.on, dim: t.dim }"><svg viewBox="0 0 24 24" v-html="icons[t.n!]" /></span>
      </template>
    </div>

    <main class="work">
      <aside class="left">
        <section class="dock nav">
          <div class="dh"><span>Navegador</span><svg viewBox="0 0 14 14" v-html="icons.float" /><svg viewBox="0 0 14 14" v-html="icons.close" /></div>
          <div class="dt"><svg v-for="n in ['add', 'refresh', 'filter', 'up', 'info']" :key="n" :viewBox="box(n)" v-html="icons[n]" /></div>
          <div class="frame">
            <div class="rows">
              <div v-for="(n, i) in browser" :key="i" class="row" :class="{ sel: n.sel }" :style="{ paddingLeft: n.d * 20 + 'px' }">
                <i class="tw" :class="n.a" /><svg class="ic" viewBox="0 0 16 16" v-html="icons[n.i]" /><span>{{ n.t }}</span>
              </div>
            </div>
            <div class="vs"><b class="sb"><i class="aup" /></b><b class="thumb t1" /><b class="groove" /><b class="sb bt"><i class="adn" /></b></div>
          </div>
          <div class="hs"><b class="hb"><i class="alf" /></b><b class="hg" /><b class="ht" /><b class="hb rt"><i class="art" /></b><b class="hc" /></div>
        </section>
        <div class="split"><i /></div>
        <section class="dock capas">
          <div class="dh"><span>Capas</span><svg viewBox="0 0 14 14" v-html="icons.float" /><svg viewBox="0 0 14 14" v-html="icons.close" /></div>
          <div class="dt"><template v-for="n in ['brush', 'grp', 'eye', 'filter', 'eps', '-', 'down', 'up', 'rem']" :key="n"><span v-if="n === '-'" class="drop dim2 dd" /><svg v-else viewBox="0 0 16 16" v-html="icons[n]" /></template></div>
          <div class="frame">
            <div class="rows lay">
              <div v-for="(l, i) in layers" :key="i" class="row" :class="{ sel: l.sel }">
                <i class="tw" :class="l.a" />
                <span class="ck" :class="{ none: !l.top }"><svg v-if="l.chk" viewBox="0 0 14 14"><path d="M2.500 6l3 4.500 4.500-8" fill="none" stroke="#000" stroke-width="2" /></svg></span>
                <svg v-if="l.i" class="ic" viewBox="0 0 16 16" v-html="icons[l.i]" />
                <i v-else-if="l.st" class="sw" :class="l.st" />
                <i v-else class="sw" :style="{ background: l.c, borderColor: l.b || l.c }" />
                <span class="lt" :class="{ it: l.top && !l.chk, bo: l.chk, un: l.sel }">{{ l.t }}</span>
                <span v-if="l.mem" class="mem" :class="{ ms: l.sel }"><svg viewBox="0 0 14 14" v-html="icons.mem" /></span>
                <i v-if="l.top" class="stripe" />
              </div>
            </div>
            <div class="vs"><b class="sb"><i class="aup" /></b><b class="thumb t2" /><b class="groove g2" /><b class="sb bt"><i class="adn" /></b></div>
          </div>
        </section>
      </aside>
      <div class="gut"><i /></div>

      <section class="canvas">
        <svg width="1146" height="889" viewBox="301 122 1146 889">
          <defs>
            <clipPath id="cl"><polygon :points="basin" /></clipPath>
            <filter id="cell" x="0" y="0" width="100%" height="100%" color-interpolation-filters="sRGB"><feTurbulence type="turbulence" baseFrequency=".09" numOctaves="2" seed="4" result="n" /><feTurbulence type="fractalNoise" baseFrequency=".09" numOctaves="2" seed="4" result="f" /><feDisplacementMap in="SourceGraphic" in2="f" scale="12" xChannelSelector="R" yChannelSelector="G" /></filter>
          </defs>
          <g transform="translate(340 340) scale(.33333)" shape-rendering="crispEdges">
            <polygon :points="basin" fill="#2b83ba" />
            <g clip-path="url(#cl)">
              <g filter="url(#cell)">
              <g fill="#fdae61">
                <path d="M229 70L262 90 258 118 250 125 252 150 245 155 243 180 233 190 230 225 211 232 208 262 212 318 225 335 240 340 262 356 272 355 262 370 248 376 225 360 210 348 190 353 176 350 178 335 162 325 156 347 145 365 147 378 156 393 152 430 170 438 188 440 195 460 150 470 40 380 60 300 120 200z" />
                <path d="M240 386L272 389 270 396 255 405 248 412 243 400zM160 438L188 440 190 458 180 458z" />
                <path d="M268 500L290 503 318 520 345 530 375 535 400 553 440 562 452 557 480 560 503 564 540 548 565 525 590 512 592 502 585 500 548 498 552 494 582 492 588 487 555 482 562 478 580 473 533 466 532 452 560 446 568 440 575 447 610 444 640 452 650 448 640 490 600 520 545 565 520 575 527 605 512 600 500 610 502 645 480 650 260 520z" />
                <path d="M610 693L650 677 700 662 740 665 735 672 705 682 655 708 620 703zM565 708h8l8 8-10 8-7-6z" />
                <path d="M740 685L747 700 748 722 752 735 735 750 718 757 690 762 690 790 697 810 730 806 750 793 762 783 772 795 770 808 752 830 785 837 805 836 808 815 840 795 885 780 970 773 985 765 990 773 1020 775 1035 795 1050 815 1045 855 1035 880 1010 892 960 885 948 900 950 945 930 965 928 1000 945 1015 970 1005 985 1000 1000 1003 1030 990 1048 980 1060 960 1085 947 1098 930 1105 915 1122 920 1120 945 1100 975 1088 985 1085 1000 1060 1025 1035 1035 1010 1040 990 1030 965 1040 965 1057 945 1057 940 1042 900 1020 850 960 800 880 700 860 620 800 530 740 520 705 540 715 552 722 565 732 580 738 590 755 610 772 648 784 650 740 665 725 690 710 720 700z" />
                <path d="M790 716L795 730 788 750 755 768 740 780 725 778 725 768 752 762 760 745 760 725z" />
                <path d="M1083 632L1092 612 1115 600 1138 605 1155 625 1160 640 1175 645 1187 670 1180 690 1160 665 1130 635 1110 660 1075 690 1040 715 1015 750 1005 745 1020 710 1050 685 1060 660 1085 665z" />
                <path d="M1150 935L1168 930 1170 945 1160 980 1140 1010 1122 1045 1150 1035 1175 1000 1180 950 1195 970 1190 1005 1185 1030 1165 1060 1140 1085 1124 1110 1135 1130 1165 1160 1200 1163 1230 1168 1205 1145 1230 1135 1290 1125 1325 1100 1345 1075 1400 1065 1430 1025 1480 1003 1550 988 1567 985 1567 955 1535 940 1510 905 1520 880 1535 850 1540 780 1560 755 1575 725 1582 735 1580 790 1570 830 1566 860 1590 845 1605 815 1604 740 1620 730 1645 705 1685 680 1703 762 1660 780 1640 800 1632 860 1618 880 1620 895 1640 908 1640 935 1650 945 1670 925 1688 940 1672 926 1645 934 1642 905 1648 870 1668 860 1670 820 1700 778 1713 778 1713 855 1735 875 1740 895 1755 903 1780 890 1790 875 1833 880 1830 905 1855 928 1865 920 1880 890 1905 865 1912 830 1940 840 1965 838 2000 855 2025 860 2040 890 2065 935 2095 952 2115 942 2110 930 2092 920 2095 885 2105 855 2092 818 2130 805 2165 780 2185 745 2180 715 2155 650 2150 600 2158 575 2172 565 2183 577 2200 622 2240 665 2280 715 2305 740 2325 735 2328 710 2315 690 2303 665 2328 640 2328 610 2350 585 2380 560 2397 530 2382 505 2380 440 2420 442 2445 425 2448 400 2475 380 2460 365 2465 315 2455 265 2435 255 2410 200 2400 155 2385 90 2390 65 2365 80 2320 83 2310 60 2290 40 2260 40 2218 8 2265 -28 2350 -38 2390 -60 2405 -110 2405 -150 2430 -158 2490 -155 2500 -145 2535 -145 2550 -140 2545 -122 2630 -118 2670 -95 2800 -85 2960 -60 2990 -40 3010 -22 3040 -18 3050 10 3062 30 3100 37 3102 60 3085 85 3010 110 2970 135 2960 150 3010 135 3115 128 3150 102 3199 115 3260 115 3220 300 2700 900 2300 1100 1900 1100 1300 1200 1150 1190 1110 1150 1060 1110 1048 1085 1050 1045 1080 1010 1110 985 1120 970z" />
                <path d="M1152 1095L1175 1070 1210 1048 1210 1062 1192 1080 1185 1100 1160 1103zM1342 970l18-15 10 8-8 8-8 12 10 30 10 6-15 8-15-5 8-20zM1263 1042l20-8 25 0 2 12-20 8-25-2z" />
                <path d="M1248 665l14-22 14 8-8 15-12 22-10-8z" />
              </g>
              <g fill="#2b83ba">
                <path d="M262 88L315 100 300 108 265 122 258 110zM880 830L900 825 940 828 925 848 900 850 880 857zM868 876h25l34 7v7h-40zM968 826L1005 802 1035 800 1000 815 975 828z" />
                <path d="M980 925l30-20 40 30-20 30 0 20-80 10-5-30zM950 1010l15 0-10 22-8-8zM980 1005l16-5 2 26-10-4z" />
                <g transform="translate(2100 -300)">
                  <path d="M525 213L530 232 560 255 545 268 518 296 510 290 513 262 522 240zM655 287L690 268 700 248 745 247 752 262 735 272 705 273 670 296zM755 270L780 250 803 262 790 275 757 280zM822 267l10-3 15 2-10 12zM425 230l15-22 20-18 20 2-2 18-30 12zM382 208l18-3 7 12-15 17-10-6zM342 220l15-3 8 10-18 8zM328 240l15-2-5 22-12 4zM264 285l12-16 8 12 22 10-20 8zM195 325l30-13 25 12-15 12-30 5z" />
                  <path d="M283 362L300 325 345 312 340 328 310 345zM413 578L440 548 468 520 495 502 500 475 515 472 580 487 600 498 625 522 650 525 665 500 690 492 710 498 690 508 670 510 655 525 652 552 672 556 700 540 708 560 710 582 703 600 716 632 690 618 630 605 590 595 583 570 520 560 480 560 430 577z" />
                  <path d="M693 460L710 442 740 437 755 448 770 475 800 480 815 465 835 440 850 440 848 468 820 495 798 547 760 545 740 520 720 500 708 475zM760 430L785 412 828 435 795 453zM837 415l8-15 5 15-5 18zM862 445L880 430 960 400 1000 420 940 435 900 442 865 460z" />
                  <path d="M175 1110L205 1092 238 1090 190 1155 176 1135zM0 1140l6 8-6 15zM0 1230l14 8-4 12-10 0z" />
                </g>
              </g>
              <g fill="#abdda4">
                <path d="M650 290L735 288 742 305 755 325 775 365 775 382 728 375 712 345 690 318 670 305zM275 362L298 340 292 332 325 332 365 373 325 365 310 374 290 370z" />
                <path d="M655 438L665 460 650 468 638 485 640 512 658 520 640 535 620 562 600 570 575 574 520 572 570 545 600 515 625 495 630 470 645 450z" />
                <path d="M1130 635L1160 665 1190 685 1225 700 1245 697 1255 680 1255 640 1285 617 1308 606 1298 625 1310 637 1355 637 1360 620 1378 618 1378 577 1408 585 1395 610 1388 635 1400 667 1440 665 1488 645 1510 620 1520 585 1530 610 1543 690 1570 712 1630 715 1655 703 1635 722 1580 728 1565 755 1540 758 1520 745 1490 742 1455 750 1420 748 1370 765 1348 785 1350 810 1305 840 1275 857 1270 842 1225 845 1195 860 1195 900 1170 915 1120 910 1085 915 1065 905 1090 885 1090 850 1110 845 1080 815 1035 795 1005 758 1020 735 1070 700z" />
                <path d="M950 890L970 885 995 890 975 905 995 935 990 960 970 962 950 945zM930 965l22-15 3 45 30-8 30 3-50 15-20 10-15-10zM1015 960l15-22 25-5-10 18-28 15zM1120 925l20 5-10 35-25 15zM1170 935l45 0 20-25-15 40-10 30-30-20zM1420 1050L1475 1025 1570 998 1620 985 1690 985 1610 1003 1500 1040 1405 1075z" />
                <g transform="translate(2100 -300)">
                  <path d="M305 147l18-14 10 2-5 8-20 6zM322 318L342 293 343 235 375 233 380 205 430 168 440 185 430 178 388 208 382 240 348 240 347 308zM440 182L527 178 555 195 575 203 640 208 720 213 775 222 860 238 878 255 850 250 770 238 740 228 620 213 570 203 540 198 520 184 450 186z" />
                  <path d="M798 540l12-35 10-12 18-18-18 40-8 15zM848 465l12-5 0 10-14 5zM650 560l40-28 10 5-30 22z" />
                </g>
              </g>
              <g fill="#ffffc0">
                <path d="M315 100L357 110 340 150 315 178 280 202 255 206 290 165 302 135zM195 463L215 440 245 422 278 450 292 502 255 495zM597 476l12-5 12 14-10 10-10-6z" />
                <path d="M1260 1118l28-3-8 10-20-1zM1408 992l18 5 20-8-5 18-12 6z" />
                <path d="M1655 320L1672 298 1700 285 1740 278 1745 268 1748 280 1730 298 1695 300 1672 315 1665 332zM1740 335L1770 310 1770 280 1795 282 1818 302 1785 330 1765 355 1745 358zM1803 243l30 5 20-8 13 8v18l-20 0-25-6zM1820 295l15-25 12 5-8 20zM2050 225l0-12 20-5 38 2 25-15 20 5-15 10-20 18-35 2-20 15-12 4z" />
                <path d="M2268 10l8-8 12 14-10 8-10-4zM2295 80l18-4-8 38-15 24-35-2 8-10 22-20z" />
              </g>
              <path d="M250 122L285 103 315 102 305 125 298 155 280 180 258 208 240 215 229 240 230 208 243 180 243 155 252 150z" fill="#d7191c" />
              </g>
              <g fill="none" stroke="#abdda4" stroke-width="3.500">
                <path d="M868 389h8l12 8 20 4 25-6 25 8 10 8 20 4 16 20 6 8 18 2" /><path d="M1028 447l20 3 50-12 35-8 20-3 30 3" stroke-width="6" /><path d="M1338 460l12-12 8-6M1285 457h7M1310 458h12l8 4h10l20 5h10M1382 487h6M1408 485l30-2 15-4 8-6 12-5 16-2M1530 462h15l10-4 10 2 5-6M2578 277l25-14M1905 263l15-4h20l8 2M1965 268l16-6" stroke-dasharray="12 5" /><path d="M338 460l12-12 6-4M362 437h6" />
                <path d="M1822 293l16-20 22-4 35 0" stroke-width="6" /><path d="M2718 274l32-15" stroke-dasharray="6 4" /><path d="M2915 205l35-32" stroke-dasharray="6 4" stroke="#2b83ba" />
              </g>
              <path d="M1085 442l20-8 14 3-16 8zM1242 452l20 0 10 8-18 0zM1103 890l12 0 10 16 28 8-30 2-15-10zM1398 795l10-3 5 5-8 5zM1415 825h18v3h-18zM1415 834h16l3 6h-18zM1302 833h8v8h-8zM1467 905l14-5-10 10zM1513 920l20 0-5 10-12-2zM1220 962h15l-3 10h-10zM495 453h9l-3 9zM896 688l12-5-4 18-7-2zM2256 130l20-12v14z" fill="#ffffc0" />
            </g>
            <polygon :points="basin" fill="none" stroke="#8d98a3" stroke-width="2.500" shape-rendering="auto" />
          </g>
        </svg>
      </section>
      <div class="gut r"><i /></div>

      <aside class="right">
        <div class="dh"><span>Caja de herramientas de Procesos</span><svg viewBox="0 0 14 14" v-html="icons.float" /><svg viewBox="0 0 14 14" v-html="icons.close" /></div>
        <div class="dt"><template v-for="(n, i) in ['gears', 'pymenu', 'clock', 'doc', '|', 'edit', '|', 'wrench']" :key="i"><i v-if="n === '|'" class="vl" /><svg v-else :viewBox="box(n)" v-html="icons[n]" /></template></div>
        <div class="find"><svg viewBox="0 0 16 16" v-html="icons.search" /><span>buff</span><svg viewBox="0 0 16 16" v-html="icons.clear" /></div>
        <div class="algs">
          <div v-for="(n, i) in algs" :key="i" class="row" :class="{ sel: n.sel, grp: n.group }" :style="{ paddingLeft: n.d * 20 + 3 + 'px' }">
            <i class="tw" :class="n.a" /><svg v-if="!n.group" class="ic" :viewBox="box(n.i)" v-html="icons[n.i]" /><span>{{ n.t }}</span>
          </div>
        </div>
      </aside>
    </main>

    <footer class="status">
      <div class="loc"><svg viewBox="0 0 16 16" v-html="icons.search" /><span>Escriba para localizar (Ctrl+K)</span></div>
      <span class="s1">Coordenada</span><span class="inp i1">595163,8169835</span><svg class="m1" viewBox="0 0 16 16" v-html="icons.mouse" />
      <span class="s2">Escala</span><span class="inp i2">1:15602<b><i class="adn" /></b></span><svg class="m2" viewBox="0 0 16 16" v-html="icons.lock" />
      <span class="s3">Amplificador</span><span class="inp i3">100%<b><i class="aup" /><i class="adn" /></b></span>
      <span class="s4">Rotación</span><span class="inp i4">0,0 °<b><i class="aup" /><i class="adn" /></b></span>
      <span class="ck"><svg viewBox="0 0 14 14"><path d="M2.500 6l3 4.500 4.500-8" fill="none" stroke="#000" stroke-width="2" /></svg></span><span class="s5">Representar</span>
      <svg class="m3" viewBox="0 0 16 16" v-html="icons.globe" /><span class="s6">EPSG:32719</span><svg class="m4" viewBox="0 0 16 16" v-html="icons.msg" />
    </footer>

    <div class="task">
      <span class="tb"><svg viewBox="0 0 16 16" width="16" height="16"><path d="M0 2.300L6.500 1.400v6.200H0zM7.300 1.300L16 0v7.600H7.300zM0 8.400h6.500v6.200L0 13.700zM7.300 8.400H16V16l-8.700-1.300z" fill="#fff" /></svg></span>
      <span class="tb"><svg width="18" height="18" viewBox="0 0 18 18"><circle cx="11" cy="7" r="5.500" fill="none" stroke="#fff" stroke-width="1.300" /><path d="M7 11l-6 6" stroke="#fff" stroke-width="1.400" /></svg></span>
      <span class="tb"><svg width="20" height="16" viewBox="0 0 20 16"><path d="M4.500 1.500h11v13h-11zM3 3.500H.7v9H3M17 3.500h2.300v9H17" fill="none" stroke="#fff" stroke-width="1.200" /></svg></span>
      <span class="tb run ex"><svg width="24" height="20" viewBox="0 0 24 20"><path d="M1 1h9l1 2h12v15H1z" fill="#fddc7d" /><path d="M1 1h9l1 3H1z" fill="#f5b93d" /><path d="M5 11h14v8h-4v-4H9v4H5z" fill="#35a5e6" /></svg></span>
      <span class="tb run ch"><svg width="24" height="24" viewBox="0 0 24 24"><path d="M12 12L2.500 6.500a11 11 0 0 1 19 0z" fill="#e33b2e" /><path d="M12 12L2.500 6.500a11 11 0 0 0 9.500 16.500z" fill="#269a4b" /><path d="M12 12l9.500-5.500A11 11 0 0 1 12 23z" fill="#fbc116" /><circle cx="12" cy="12" r="5.400" fill="#fff" /><circle cx="12" cy="12" r="4.300" fill="#2f7de9" /></svg></span>
      <span class="tb run act"><svg width="24" height="24" viewBox="0 0 24 24" v-html="icons.qgis" /></span>
      <span class="tb run wd"><svg width="24" height="22" viewBox="0 0 24 22"><path d="M6 0h18v6H6z" fill="#41a5ee" /><path d="M6 6h18v5H6z" fill="#2b7cd3" /><path d="M6 11h18v5H6z" fill="#185abd" /><path d="M6 16h18v6H6z" fill="#103f91" /><path d="M0 5h12.500v12.500H0z" fill="#185abd" /><text x="6.300" y="15" text-anchor="middle" font-size="10.500" font-weight="700" font-family="Open Sans,sans-serif" fill="#fff">W</text></svg></span>
      <span class="tb run gs"><svg width="24" height="24" viewBox="0 0 24 24"><path d="M0 0h24v24H0z" fill="#11589b" /><path d="M0 0h3C1 10 9 19 24 19v3C9 23 0 15 0 8z" fill="#60b846" /><path d="M14 0h8C13 4 14 14 24 18 9 18 4 6 14 0z" fill="#fff" /><path d="M6 0h8C5 4 6 14 18 18 6 16 1 7 6 0z" fill="#60b846" opacity=".75" /></svg></span>
      <div class="tray">
        <svg class="y1" width="12" height="8" viewBox="0 0 12 8"><path d="M1 7l5-5.500L11 7" fill="none" stroke="#fff" stroke-width="1.300" /></svg>
        <svg class="y2" width="17" height="14" viewBox="0 0 17 14"><path d="M4 2.500h12v8H4zM10 10.500v3M6 13.500h8" fill="none" stroke="#fff" /><path d="M.5.500h4v4h-4zM2.500 4v6.500H4" fill="#000" stroke="#fff" /></svg>
        <svg class="y3" width="16" height="13" viewBox="0 0 16 13"><path d="M1 4.500h2.500L7 1v11L3.500 8.500H1z" fill="none" stroke="#fff" /><path d="M9.500 4l5 5M14.500 4l-5 5" stroke="#fff" stroke-width="1.100" /></svg>
        <div class="clk"><span>16:13</span><span>1/4/2022</span></div>
        <svg class="y4" width="28" height="26" viewBox="0 0 28 26"><path d="M1 1h17v14h-5v4l-5-4H1z" fill="#fff" /><path d="M4 5h11M4 8h11M4 11h7" stroke="#111" /><circle cx="17.500" cy="17" r="7.500" fill="#222" stroke="#888" /><text x="17.500" y="21" text-anchor="middle" font-size="11" font-family="Open Sans,sans-serif" fill="#fff">1</text></svg>
        <i class="edge" />
      </div>
    </div>
  </div>
</template>

<style>
body { margin: 0; overflow: hidden; }
</style>
<style scoped>
.app { width: 1920px; height: 1080px; display: flex; flex-direction: column; background: #efefef; font: 12px/18px "Open Sans", "Noto Sans", sans-serif; letter-spacing: -0.35px; color: #000; white-space: nowrap; overflow: hidden; }
.app * { box-sizing: border-box; }
svg { display: block; flex: none; }
.title { height: 23px; background: #fff; display: flex; align-items: center; flex: none; }
.logo { width: 16px; height: 16px; margin: 0 5px 0 2px; }
.name { flex: 1; letter-spacing: -0.33px; }
.menu { height: 20px; display: flex; flex: none; padding-left: 10px; gap: 14px; border-bottom: 1px solid #d4d4d4; line-height: 20px; letter-spacing: -.42px; }
.mi { flex: none; text-decoration-thickness: 1px; }
.mi u { text-underline-offset: 2px; }
.bar { height: 39px; flex: none; display: flex; align-items: center; background: linear-gradient(#fbfbfb, #efefef); border-bottom: 1px solid #b4b4b4; }
.bar0 { padding-bottom: 1px; }
.bar1 { height: 40px; border-bottom-width: 2px; }
.grip { width: 16px; height: 19px; flex: none; background: radial-gradient(circle, #bbb 0.8px, transparent 1px) 4px 0 / 3.500px 3.200px; background-clip: content-box; padding: 0 5px 0 4px; }
.first { margin-left: -3.500px; padding: 0 2px 0 7px; }
.tight { margin: 0 -1.500px 0 -1.500px; }
.sep { width: 8px; height: 24px; flex: none; border-left: 1px solid #ccc; margin-left: 3px; margin-right: -3px; }
.drop { width: 12px; flex: none; display: flex; justify-content: center; }
.drop::after { content: ""; border: 4px solid transparent; border-top: 5px solid #444; border-bottom: 0; }
.dim2::after { opacity: .5; }
.tool { width: 33px; height: 32px; flex: none; display: flex; align-items: center; justify-content: center; }
.tool svg { width: 23px; height: 23px; }
.tool.on { background: #dadada; border: 1px solid #a8a8a8; border-radius: 2px; margin: 0 .5px; width: 32px; }
.dim svg { opacity: .35; filter: saturate(.5); }
.work { height: 890px; flex: none; display: flex; }
.left { width: 294px; flex: none; display: flex; flex-direction: column; }
.dock { display: flex; flex-direction: column; }
.dh { height: 19px; display: flex; align-items: center; padding: 0 2px 0 4px; gap: 2px; flex: none; letter-spacing: -0.3px; }
.dh span { flex: 1; }
.dh svg { width: 11px; height: 11px; margin-left: 1px; }
.dt { height: 31px; display: flex; align-items: center; padding-left: 8px; gap: 9px; flex: none; padding-bottom: 3px; }
.dt svg { width: 16px; height: 16px; }
.dd { margin: 0 -7px 0 -7px; width: 18px; }
.frame { display: flex; border: 1px solid #b4b4b4; background: #fff; overflow: hidden; }
.nav .frame { height: 421px; border-bottom: 0; }
.capas .frame { height: 346px; }
.rows { flex: 1; overflow: hidden; }
.lay { padding-top: 0; margin-top: -15px; position: relative; }
.row { height: 18px; display: flex; align-items: center; }
.sel { background: #efefef; }
.tw { width: 13px; flex: none; display: flex; justify-content: center; margin-right: 6px; }
.nav .tw { width: 12px; margin-right: 7px; }
.tw.c::after { content: ""; border: 4px solid transparent; border-left: 5px solid #555; border-right: 0; }
.tw.o::after { content: ""; border: 4px solid transparent; border-top: 5px solid #555; border-bottom: 0; }
.ic { width: 16px; height: 16px; margin-right: 6px; }
.vs { width: 14px; flex: none; border-left: 1px solid #b4b4b4; display: flex; flex-direction: column; }
.sb { height: 14px; border-bottom: 1px solid #b4b4b4; display: flex; align-items: center; justify-content: center; background: #f6f6f6; flex: none; }
.bt { border-top: 1px solid #b4b4b4; border-bottom: 0; }
.aup { border: 4px solid transparent; border-bottom: 5px solid #555; border-top: 0; }
.adn { border: 4px solid transparent; border-top: 5px solid #555; border-bottom: 0; }
.alf { border: 4px solid transparent; border-right: 5px solid #555; border-left: 0; }
.art { border: 4px solid transparent; border-left: 5px solid #555; border-right: 0; }
.thumb { flex: none; background: linear-gradient(90deg, #fff, #f1f1f1); border-bottom: 1px solid #b4b4b4; }
.t1 { height: 137px; } .t2 { height: 107px; background: #e4e4e4; }
.groove { flex: 1; background: #e6e6e6; } .g2 { background: linear-gradient(90deg, #f4f4f4, #fff); }
.hs { height: 16px; display: flex; border: 1px solid #b4b4b4; background: #efefef; }
.hb { width: 14px; border-right: 1px solid #b4b4b4; background: #f6f6f6; display: flex; align-items: center; justify-content: center; }
.hg { width: 4px; background: #e0e0e0; border-right: 1px solid #b4b4b4; }
.ht { flex: 1; background: linear-gradient(#fff, #f0f0f0); }
.rt { border-left: 1px solid #b4b4b4; } .hc { width: 14px; }
.split { height: 5px; display: flex; justify-content: center; align-items: center; }
.split i { width: 16px; height: 1px; border-top: 1px dotted #aaa; }
.capas .dh { height: 22px; }
.capas .dt { height: 30px; padding-bottom: 4px; }
.lay .tw { width: 20px; margin-right: 3px; }
.ck { width: 14px; height: 14px; border: 1px solid #b4b4b4; background: #fff; border-radius: 1px; flex: none; }
.none { visibility: hidden; }
.lay .ck { margin-right: 6px; }
.lay .ic { margin-left: 1px; margin-right: 5px; }
.sw { width: 16px; height: 16px; border: 1px solid; margin-right: 6px; flex: none; }
.line { height: 1px; border: 0; background: #ddb850; } .box { border: 2px solid #4caf45; }
.lt { flex: 1; } .it { font-style: italic; font-weight: 700; color: #777; letter-spacing: -.3px; }
.bo { font-weight: 700; } .un { text-decoration: underline; }
.mem { width: 16px; height: 16px; background: #f4f4f4; border: 1px solid #e0e0e0; color: #666; margin-right: 1px; }
.mem svg { width: 14px; height: 14px; } .ms { color: #5d7f9c; }
.stripe { width: 3px; height: 16px; background: #e4e4e4; margin-right: 1px; }
.gut { width: 7px; border-right: 1px solid #b4b4b4; display: flex; align-items: center; justify-content: center; flex: none; }
.gut i { height: 16px; border-left: 1px dotted #aaa; }
.canvas { width: 1147px; background: #fff; border-bottom: 1px solid #b4b4b4; flex: none; }
.gut.r { border-left: 1px solid #b4b4b4; border-right: 0; width: 7px; }
.right { flex: 1; display: flex; flex-direction: column; letter-spacing: -0.34px; }
.right .dh { letter-spacing: -.4px; }
.right .dt { padding-left: 8px; height: 30px; padding-bottom: 1px; }
.right .dt svg:nth-of-type(5) { opacity: .6; }
.vl { height: 12px; border-left: 1px solid #ccc; margin: 0 -1.500px; }
.find { height: 22px; border: 1px solid #a8a8a8; border-radius: 2px; background: #fff; display: flex; align-items: center; padding: 0 8px; gap: 7px; flex: none; }
.find span { flex: 1; } .find svg { width: 13px; height: 13px; }
.algs { flex: 1; background: #fff; border: 1px solid #b4b4b4; margin-top: 1px; }
.grp { height: 15px; }
.algs .tw { margin-right: 7px; }
.grp .tw { margin-right: 5px; }
.status { height: 28px; flex: none; display: flex; align-items: center; padding: 1px 0 0 4px; font-size: 11.500px; letter-spacing: -0.45px; }
.loc { width: 255px; height: 21px; border: 1px solid #a0a0a0; border-radius: 3px; background: #fff; color: #777; display: flex; align-items: center; padding-left: 8px; gap: 6px; margin-right: 804px; letter-spacing: -.35px; flex: none; }
.loc svg { width: 13px; height: 13px; }
.inp { height: 21px; border: 1px solid #a8a8a8; border-radius: 3px; background: #fff; display: flex; align-items: center; padding-left: 6px; flex: none; overflow: hidden; letter-spacing: -.3px; }
.inp b { margin-left: auto; width: 14px; height: 100%; border-left: 1px solid #b8b8b8; display: flex; flex-direction: column; justify-content: center; align-items: center; gap: 4px; background: #f6f6f6; }
.s1 { width: 63px; letter-spacing: -.55px; } .i1 { width: 97px; } .m1 { width: 15px; margin: 0 13px 0 5px; }
.s2 { width: 34px; } .i2 { width: 80px; padding-left: 4px; } .i2 b { width: 20px; } .m2 { width: 15px; height: 15px; margin: 0 7px 0 12px; }
.s3 { width: 61px; letter-spacing: -.6px; } .i3 { width: 87px; padding-left: 4px; } .s4 { width: 52px; margin-left: 9px; } .i4 { width: 83px; padding-left: 4px; margin-right: 7px; }
.s5 { margin-left: 4px; width: 79px; letter-spacing: -.3px; } .m3 { width: 14px; height: 14px; } .s6 { width: 79px; margin-left: 4px; letter-spacing: -.35px; } .m4 { width: 16px; height: 16px; }
.task { height: 40px; background: #010308; display: flex; flex: none; color: #fff; }
.tb { width: 48px; display: flex; align-items: center; justify-content: center; margin-right: 0; flex: none; }
.run { border-bottom: 2px solid #76b9ed; padding-top: 2px; }
.ex { width: 40px; margin-left: 7px; } .ch { width: 40px; margin-left: 9px; border-image: linear-gradient(90deg, #76b9ed 78%, #4a7aa5 80%) 1; } .act { background: #35363a; margin-left: 5px; } .wd { width: 40px; margin-left: 5px; } .gs { width: 40px; margin-left: 9px; }
.tray { margin-left: auto; display: flex; align-items: center; }
.y1 { margin-right: 10px; } .y2 { margin-right: 7px; } .y3 { margin-right: 13px; }
.clk { display: flex; flex-direction: column; align-items: center; width: 46px; margin-right: 20px; }
.y4 { margin-right: 9px; }
.edge { width: 1px; height: 40px; background: #555; margin-right: 4px; }
</style>
